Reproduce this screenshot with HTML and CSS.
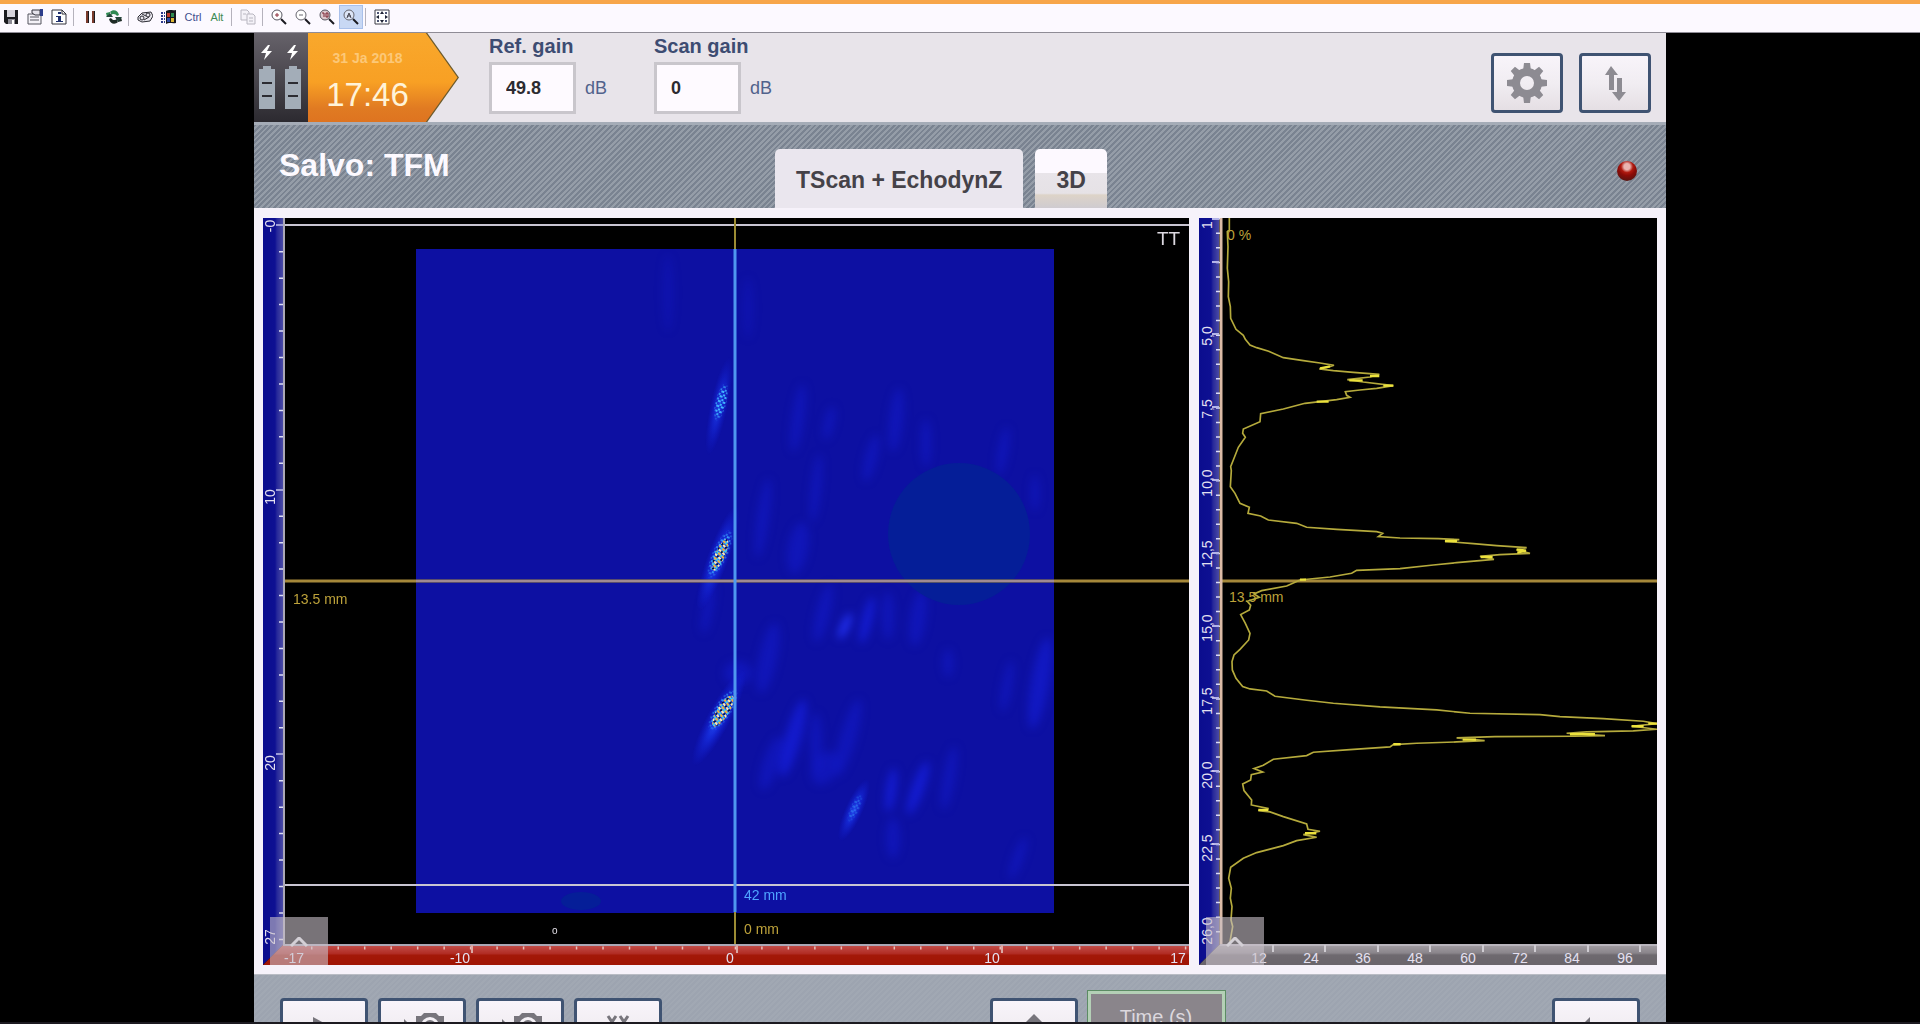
FILE: index.html
```html
<!DOCTYPE html>
<html lang="en">
<head>
  <meta charset="UTF-8">
  <meta name="viewport" content="width=device-width, initial-scale=1.0">
  <title>Salvo: TFM</title>
  <link rel="stylesheet" href="styles.css">
</head>
<body>

  <nav class="toolbar">
    <button class="tool" aria-label="Save"><svg viewBox="0 0 16 16"><path d="M1 1h14v14H3l-2-2z" fill="#1b1b20"/><path d="M4 1h8v7H4z" fill="#d6d3dc"/><path d="M5 10h7v5H5z" fill="#8c8a94"/><path d="M9 11h2v4H9z" fill="#fff"/></svg></button>
    <button class="tool" aria-label="Options"><svg viewBox="0 0 16 16"><path d="M1 5h13v10H1z" fill="#f4f2f8" stroke="#55555f"/><path d="M3 8h9M3 11h9" stroke="#55555f"/><path d="M5 1h8v5H8L5 4z" fill="#e4e2ea" stroke="#33333c"/><path d="M13 0h3v7h-3z" fill="#2d3d8c"/></svg></button>
    <button class="tool" aria-label="Information"><svg viewBox="0 0 16 16"><path d="M1 1h10l4 4v10H1z" fill="#fff" stroke="#33333c"/><path d="M11 1v4h4" fill="none" stroke="#33333c"/><path d="M7 3h3v2H7zM5 7h5v5h2v1H5v-1h2V8H5z" fill="#1f2f6e"/></svg></button>
    <span class="sep"></span>
    <button class="tool" aria-label="Pause"><svg viewBox="0 0 16 16"><path d="M4 2h3v12H4zM10 2h3v12h-3z" fill="#7a3a2c"/><path d="M6 2h1v12H6zM12 2h1v12h-1z" fill="#1b1b20"/></svg></button>
    <button class="tool" aria-label="Refresh"><svg viewBox="0 0 16 16"><path d="M1 8L5 3V6C7 4 10 5 11 7L13 6C12 1 7 0 4 3L0 4z" fill="#2f8a52"/><path d="M15 8l-4 5v-3c-2 2-5 1-6-1L3 10c1 5 6 6 9 3l4-1z" fill="#1e2b26"/><path d="M0 8h7L4 4zM9 8h7l-4 5z" fill="#24463a"/></svg></button>
    <span class="sep"></span>
    <button class="tool" aria-label="Connection"><svg viewBox="0 0 16 16"><g fill="#e9e7ee" stroke="#2c2c34"><path d="M1 8l4-4 9-1 2 4-3 5-8 1-4-2z"/><circle cx="5" cy="9" r="2"/><circle cx="11" cy="6" r="2"/><path d="M7 11l5-3M5 5l4 2"/></g></svg></button>
    <button class="tool" aria-label="Start menu"><svg viewBox="0 0 16 16"><path d="M5 2c4-2 6 0 10-1v13c-4 1-6-1-10 1z" fill="#17171c"/><path d="M6 4h3v4H6z" fill="#c0392b"/><path d="M10 4h3v4h-3z" fill="#2e8b4f"/><path d="M6 9h3v4H6z" fill="#2b49a8"/><path d="M10 9h3v4h-3z" fill="#dcb632"/><path d="M0 4h4M0 7h4M0 10h4M0 13h4" stroke="#2b3a8c" stroke-width="2" stroke-dasharray="2 1"/></svg></button>
    <button class="tool ctrl">Ctrl</button>
    <button class="tool alt">Alt</button>
    <span class="sep"></span>
    <button class="tool" aria-label="Copy"><svg viewBox="0 0 16 16" fill="#f4f2f8" stroke="#b8b6c0"><path d="M1 1h6l2 2v8H1z"/><path d="M7 5h6l2 2v8H7z"/><path d="M9 9h4M9 12h4M3 5h3"/></svg></button>
    <span class="sep"></span>
    <button class="tool" aria-label="Zoom in"><svg viewBox="0 0 16 16"><circle cx="6" cy="6" r="5" fill="#fff" stroke="#55555f"/><path d="M6 4v4M4 6h4" stroke="#8c2f3c"/><path d="M10 10l5 5" stroke="#1b1b20" stroke-width="2"/></svg></button>
    <button class="tool" aria-label="Zoom out"><svg viewBox="0 0 16 16"><circle cx="6" cy="6" r="5" fill="#fff" stroke="#66666f"/><path d="M4 6h4" stroke="#66666f"/><path d="M10 10l5 5" stroke="#1b1b20" stroke-width="2"/></svg></button>
    <button class="tool" aria-label="Zoom 100%"><svg viewBox="0 0 16 16"><circle cx="6" cy="6" r="5" fill="#dcc8cc" stroke="#55555f"/><path d="M3 4h2v4M7 4h2v4H7z" fill="none" stroke="#7a2330"/><path d="M10 10l5 5" stroke="#1b1b20" stroke-width="2"/></svg></button>
    <button class="tool active" aria-label="Zoom auto"><svg viewBox="0 0 16 16"><circle cx="6" cy="6" r="5" fill="#dde5f6" stroke="#66666f"/><path d="M4 9l2-5 2 5M4 7h4" fill="none" stroke="#44444f"/><path d="M10 10l5 5" stroke="#1b1b20" stroke-width="2"/></svg></button>
    <span class="sep"></span>
    <button class="tool" aria-label="Full screen"><svg viewBox="0 0 16 16"><path d="M1 1h14v14H1z" fill="#fff" stroke="#3c3c46"/><path d="M8 2l2 3H6zM8 14l2-3H6zM2 8l3-2v4zM14 8l-3-2v4z" fill="#1f2436"/><path d="M3 3h2v2H3zM11 3h2v2h-2zM3 11h2v2H3zM11 11h2v2h-2z" fill="#4c5474"/></svg></button>
  </nav>

  <main class="app">
    <header class="header">
      <svg class="battery" viewBox="0 0 54 89">
        <defs>
          <g id="cell">
            <path d="M8 12L1 20h5l-2 7 8-9H7l3-6z" fill="#fff"/>
            <path d="M-1 36h16v40H-1zM3 33h8v3H3z" fill="#a3adb8"/>
            <path d="M2 50h10M2 63h10" stroke="#2c2c32" stroke-width="2"/>
          </g>
        </defs>
        <use href="#cell" x="6"/>
        <use href="#cell" x="32"/>
      </svg>
      <div class="clock">
        <span class="date">31 Ja 2018</span>
        <span class="time">17:46</span>
      </div>
      <div class="field">
        <label for="ref-gain">Ref. gain</label>
        <input type="text" id="ref-gain" value="49.8"><span class="unit">dB</span>
      </div>
      <div class="field">
        <label for="scan-gain">Scan gain</label>
        <input type="text" id="scan-gain" value="0"><span class="unit">dB</span>
      </div>
      <div class="actions">
        <button class="key" aria-label="Settings">
          <svg viewBox="0 0 40 40" width="40" height="40">
            <g fill="#8d8b92">
              <path id="teeth" d="M17 0h6l1 8h-8zM17 40h6l1-8h-8zM0 17v6l8 1v-8zM40 17v6l-8 1v-8z"/>
              <use href="#teeth" transform="rotate(45 20 20)"/>
            </g>
            <circle cx="20" cy="20" r="11" fill="none" stroke="#8d8b92" stroke-width="8"/>
          </svg>
        </button>
        <button class="key" aria-label="Transfer">
          <svg viewBox="0 0 40 40" width="40" height="40"><path d="M16 3l7 9h-4v15h-5V12h-4zM24 38l-7-9h5V15h5v14h4z" fill="#8d8b92"/></svg>
        </button>
      </div>
    </header>

    <div class="tabbar">
      <h1>Salvo: TFM</h1>
      <button class="tab selected">TScan + EchodynZ</button>
      <button class="tab">3D</button>
      <span class="led"></span>
    </div>

    <div class="views">
      <!-- TFM image -->
      <section class="view">
        <svg viewBox="0 0 926 747">
          <defs>
            <linearGradient id="blue-axis"><stop offset="0" stop-color="#0b0d8e"/><stop offset=".6" stop-color="#0e1092"/><stop offset=".7" stop-color="#26289a"/><stop offset="1" stop-color="#4a4aa4"/></linearGradient>
            <linearGradient id="red-axis" x2="0" y2="1"><stop offset="0" stop-color="#c4504c"/><stop offset=".45" stop-color="#b02a22"/><stop offset=".5" stop-color="#a31808"/><stop offset="1" stop-color="#a01404"/></linearGradient>
            <linearGradient id="grey-axis" x2="0" y2="1"><stop offset="0" stop-color="#a39ea4"/><stop offset=".4" stop-color="#8a858b"/><stop offset=".5" stop-color="#6e696f"/><stop offset="1" stop-color="#6a656b"/></linearGradient>
            <radialGradient id="glow"><stop offset="0" stop-color="#2a5cff"/><stop offset=".4" stop-color="#1a38f4" stop-opacity=".7"/><stop offset="1" stop-color="#1420e0" stop-opacity="0"/></radialGradient>
            <radialGradient id="fade"><stop offset=".6" stop-color="#fff"/><stop offset="1" stop-color="#fff" stop-opacity="0"/></radialGradient>
            <pattern id="cool" width="5" height="5" patternUnits="userSpaceOnUse" patternTransform="rotate(20)">
              <path d="M0 0h3v2H0zM3 3h2v2H3z" fill="#3fb4ff"/>
            </pattern>
            <pattern id="hot" width="5" height="6" patternUnits="userSpaceOnUse" patternTransform="rotate(20)">
              <path d="M0 0h3v2H0z" fill="#ffe9b0"/><path d="M2 3h3v2H2z" fill="#f2b23c"/><path d="M3 0h2v2H3z" fill="#06103c"/><path d="M0 3h2v2H0z" fill="#38c8f0"/>
            </pattern>
            <filter id="soft" filterUnits="userSpaceOnUse" x="153" y="31" width="638" height="664" color-interpolation-filters="sRGB"><feGaussianBlur stdDeviation="4"/></filter>
            <mask id="m1"><ellipse cx="458" cy="184" rx="6" ry="20" fill="url(#fade)" transform="rotate(14 458 184)"/></mask>
            <mask id="m2"><ellipse cx="457" cy="336" rx="8" ry="27" fill="url(#fade)" transform="rotate(24 457 336)"/></mask>
            <mask id="m3"><ellipse cx="460" cy="492" rx="9" ry="25" fill="url(#fade)" transform="rotate(32 460 492)"/></mask>
            <mask id="m4"><ellipse cx="592" cy="590" rx="5" ry="16" fill="url(#fade)" transform="rotate(24 592 590)"/></mask>
          </defs>
          <rect width="926" height="747"/>
          <rect x="153" y="31" width="638" height="664" fill="#0d10a2"/>

          <!-- faint structure noise -->
          <g filter="url(#soft)" fill="#141cd0" fill-opacity=".5">
            <ellipse cx="405" cy="75" rx="5" ry="38" fill-opacity=".3"/>
            <ellipse cx="485" cy="90" rx="5" ry="30" fill-opacity=".3"/>
            <ellipse cx="535" cy="200" rx="6" ry="34" transform="rotate(8 535 200)"/>
            <ellipse cx="566" cy="205" rx="5" ry="17" transform="rotate(12 566 205)"/>
            <ellipse cx="633" cy="202" rx="7" ry="32" transform="rotate(6 633 202)"/>
            <ellipse cx="608" cy="240" rx="6" ry="24" transform="rotate(14 608 240)"/>
            <ellipse cx="663" cy="225" rx="5" ry="24"/>
            <ellipse cx="740" cy="233" rx="5" ry="24" transform="rotate(10 740 233)"/>
            <ellipse cx="772" cy="275" rx="4" ry="18"/>
            <ellipse cx="553" cy="270" rx="5" ry="34" transform="rotate(6 553 270)"/>
            <ellipse cx="500" cy="300" rx="6" ry="40" transform="rotate(8 500 300)"/>
            <ellipse cx="535" cy="330" rx="10" ry="26" transform="rotate(10 535 330)"/>
            <ellipse cx="560" cy="395" rx="7" ry="30" transform="rotate(14 560 395)"/>
            <ellipse cx="582" cy="408" rx="4" ry="14" transform="rotate(24 582 408)" fill="#2230f0" fill-opacity="1"/>
            <ellipse cx="604" cy="402" rx="5" ry="24" transform="rotate(14 604 402)" fill-opacity="1"/>
            <ellipse cx="625" cy="398" rx="6" ry="24"/>
            <ellipse cx="655" cy="400" rx="8" ry="28" transform="rotate(8 655 400)"/>
            <ellipse cx="685" cy="445" rx="5" ry="14"/>
            <ellipse cx="505" cy="440" rx="9" ry="36" transform="rotate(12 505 440)"/>
            <ellipse cx="744" cy="468" rx="5" ry="26" transform="rotate(10 744 468)"/>
            <ellipse cx="777" cy="465" rx="9" ry="46" transform="rotate(10 777 465)" fill-opacity=".7"/>
            <ellipse cx="530" cy="520" rx="8" ry="40" transform="rotate(16 530 520)" fill-opacity=".9"/>
            <ellipse cx="553" cy="525" rx="6" ry="30"/>
            <ellipse cx="508" cy="545" rx="8" ry="28" transform="rotate(18 508 545)"/>
            <ellipse cx="585" cy="520" rx="8" ry="40" transform="rotate(16 585 520)"/>
            <ellipse cx="562" cy="550" rx="12" ry="18" transform="rotate(30 562 550)"/>
            <ellipse cx="628" cy="572" rx="5" ry="22" transform="rotate(8 628 572)" fill-opacity="1"/>
            <ellipse cx="655" cy="570" rx="6" ry="28" transform="rotate(20 655 570)" fill-opacity="1"/>
            <ellipse cx="686" cy="560" rx="6" ry="32" transform="rotate(10 686 560)"/>
            <ellipse cx="630" cy="620" rx="7" ry="20"/>
            <ellipse cx="755" cy="640" rx="5" ry="22" transform="rotate(20 755 640)"/>
            <ellipse cx="445" cy="390" rx="5" ry="26" transform="rotate(10 445 390)"/>
            <ellipse cx="475" cy="455" rx="14" ry="12"/>
          </g>

          <!-- echoes -->
          <ellipse cx="456" cy="188" rx="9" ry="50" fill="url(#glow)" transform="rotate(12 456 188)" opacity=".7"/>
          <ellipse cx="455" cy="340" rx="11" ry="56" fill="url(#glow)" transform="rotate(20 455 340)" opacity=".9"/>
          <ellipse cx="456" cy="500" rx="12" ry="54" fill="url(#glow)" transform="rotate(28 456 500)" opacity=".9"/>
          <ellipse cx="591" cy="592" rx="9" ry="34" fill="url(#glow)" transform="rotate(24 591 592)" opacity=".8"/>
          <rect x="440" y="155" width="36" height="60" fill="url(#cool)" mask="url(#m1)"/>
          <rect x="430" y="300" width="50" height="72" fill="url(#cool)" mask="url(#m2)"/>
          <ellipse cx="457" cy="337" rx="5" ry="17" fill="url(#hot)" transform="rotate(24 457 337)"/>
          <rect x="430" y="462" width="50" height="66" fill="url(#cool)" mask="url(#m3)"/>
          <ellipse cx="460" cy="493" rx="6" ry="18" fill="url(#hot)" transform="rotate(32 460 493)"/>
          <rect x="580" y="570" width="26" height="40" fill="url(#cool)" mask="url(#m4)" opacity=".35"/>

          <circle cx="696" cy="316" r="71" fill="#051e98"/>
          <ellipse cx="318" cy="683" rx="20" ry="9" fill="#051e98"/>

          <!-- cursors -->
          <path d="M21 7h905M21 667h905" stroke="#c9c5d2" stroke-width="2"/>
          <path d="M21 363h905" stroke="#a5883a" stroke-width="3"/>
          <path d="M153 363h638" stroke="#a08a92" stroke-width="2"/>
          <path d="M472 0v31M472 694v33" stroke="#9c8c34" stroke-width="2"/>
          <path d="M472 31v663" stroke="#4f97f0" stroke-width="3"/>
          <g class="cursor-text">
            <text x="30" y="386">13.5 mm</text>
            <text x="481" y="716">0 mm</text>
            <text x="481" y="682" class="cyan">42 mm</text>
          </g>
          <text class="mode" x="894" y="27">TT</text>
          <text class="mark" x="289" y="716">o</text>

          <!-- axes -->
          <path d="M0 0h20v727L0 747z" fill="url(#blue-axis)"/>
          <path d="M0 747l20-20h906v20z" fill="url(#red-axis)"/>
          <path d="M21 0v727h905" fill="none" stroke="#aba8b6" stroke-width="2"/>
          <path d="M18 6.5v720" stroke="#dcdcf4" stroke-width="4" stroke-dasharray="1.5 24.95"/>
          <path d="M13 7h7M13 272h7M13 536h7" stroke="#9c9cd8" stroke-width="2"/>
          <path d="M48 730h878" stroke="#e8c0bc" stroke-width="3" stroke-dasharray="1.5 24.98"/>
          <path d="M209 727v8M474 727v8M739 727v8" stroke="#dca8a4" stroke-width="2"/>
          <g class="axis-text">
            <text transform="translate(12 8) rotate(-90)">-0</text>
            <text transform="translate(12 279) rotate(-90)">10</text>
            <text transform="translate(12 545) rotate(-90)">20</text>
            <text transform="translate(12 719) rotate(-90)">27</text>
            <text x="31" y="745">-17</text>
            <text x="197" y="745">-10</text>
            <text x="467" y="745">0</text>
            <text x="729" y="745">10</text>
            <text x="915" y="745">17</text>
          </g>
        </svg>
        <button class="expand" aria-label="Expand view"><svg viewBox="0 0 18 10"><path d="M1 9l8-8 8 8" fill="none" stroke="#d4d0d6" stroke-width="3"/></svg></button>
      </section>

      <!-- echodynamic curve -->
      <section class="view">
        <svg viewBox="0 0 458 747">
          <rect width="458" height="747"/>
          <path d="M23 363h435" stroke="#a5883a" stroke-width="3"/>
          <g class="cursor-text">
            <text x="28" y="22">0 %</text>
            <text x="30" y="384">13.5 mm</text>
          </g>
          <g transform="translate(-9 -8) scale(.3333)">
            <polyline class="curve" points="118,24 118,60 112,65 114,110 112,175 116,215 115,260 121,290 122,325 138,358 160,376 166,388 180,405 200,413 236,424 280,443 340,452 390,459 432,466 412,472 388,477 430,482 490,487 568,493 540,501 472,509 520,516 610,527 560,535 510,540 466,545 470,556 480,562 440,569 345,580 280,597 212,611 210,635 160,657 158,670 166,682 145,712 130,750 122,770 124,782 121,830 135,850 150,880 178,892 174,910 212,918 235,930 320,940 350,952 440,958 560,965 578,970 565,980 630,984 745,986 808,989 765,994 850,1001 920,1007 1010,1013 980,1020 1020,1030 930,1034 870,1039 912,1048 800,1058 730,1065 630,1076 500,1081 485,1090 420,1101 330,1110 290,1128 215,1142 192,1152 208,1162 172,1174 182,1186 178,1200 152,1214 166,1240 180,1270 176,1290 150,1318 132,1335 126,1355 127,1380 138,1405 158,1430 180,1437 230,1443 255,1459 350,1471 430,1480 570,1491 740,1500 840,1510 1050,1514 1110,1520 1240,1526 1360,1534 1401,1541 1325,1549 1401,1558 1330,1563 1190,1566 1130,1570 1245,1577 1150,1579 915,1580 800,1584 884,1592 800,1596 680,1600 610,1604 600,1611 480,1619 370,1627 350,1637 250,1648 220,1666 192,1676 218,1686 184,1694 182,1710 158,1722 162,1742 185,1770 184,1785 236,1796 205,1802 240,1806 280,1820 350,1842 354,1858 390,1864 340,1874 380,1882 320,1892 280,1907 200,1928 160,1945 122,1972 116,2005 124,2035 121,2065 126,2090 123,2130 128,2150 120,2195"/>
            <path class="hot-spot" d="M390 475l30-6M540 498h28M478 511h40M580 527h30M380 575h36M765 993h36M980 1018l28 4-26 6M872 1041h36M330 1109h18M1325 1549h36M1375 1541h26M1140 1573h75M818 1589h40M610 1603h22M205 1800h30M345 1870h34"/>
          </g>

          <path d="M0 0h20v727L0 747z" fill="url(#blue-axis)"/>
          <path d="M0 747l20-20h438v20z" fill="url(#grey-axis)"/>
          <path d="M22 0v727" stroke="#dcbba6" stroke-width="3"/>
          <path d="M21 727h437" stroke="#b9b5bd" stroke-width="2"/>
          <path d="M19 0v727" stroke="#dcdcf4" stroke-width="4" stroke-dasharray="1.5 13.05"/>
          <path d="M13 1h7M13 44h7M13 116h7M13 189h7M13 262h7M13 335h7M13 408h7M13 480h7M13 553h7M13 626h7" stroke="#b4b4e8" stroke-width="2"/>
          <path d="M74 727v7M126 727v7M179 727v7M231 727v7M284 727v7M336 727v7M389 727v7M441 727v7" stroke="#cfccd2" stroke-width="2"/>
          <g class="axis-text">
            <text transform="translate(13 7) rotate(-90)">1</text>
            <text transform="translate(13 118) rotate(-90)">5,0</text>
            <text transform="translate(13 191) rotate(-90)">7,5</text>
            <text transform="translate(13 265) rotate(-90)">10,0</text>
            <text transform="translate(13 336) rotate(-90)">12,5</text>
            <text transform="translate(13 410) rotate(-90)">15,0</text>
            <text transform="translate(13 483) rotate(-90)">17,5</text>
            <text transform="translate(13 557) rotate(-90)">20,0</text>
            <text transform="translate(13 630) rotate(-90)">22,5</text>
            <text transform="translate(13 713) rotate(-90)">26,0</text>
            <text x="60" y="745">12</text>
            <text x="112" y="745">24</text>
            <text x="164" y="745">36</text>
            <text x="216" y="745">48</text>
            <text x="269" y="745">60</text>
            <text x="321" y="745">72</text>
            <text x="373" y="745">84</text>
            <text x="426" y="745">96</text>
          </g>
        </svg>
        <button class="expand" aria-label="Expand view"><svg viewBox="0 0 18 10"><path d="M1 9l8-8 8 8" fill="none" stroke="#d4d0d6" stroke-width="3"/></svg></button>
      </section>
    </div>

    <footer class="controls">
      <div class="group">
        <button class="key" aria-label="Play"><svg viewBox="0 0 40 40" width="40" height="40"><path d="M9 9l22 12L9 33z" fill="#77757c"/></svg></button>
        <button class="key" aria-label="Snapshot"><svg viewBox="0 0 50 40" width="50" height="40"><g id="camera"><path d="M19 8h5l3-3h12l3 3h5v24H19z" fill="#77757c"/><circle cx="33" cy="18" r="9" fill="#f4f1f6"/><circle cx="33" cy="18" r="6" fill="#77757c"/><path d="M7 11l7 7-7 7z" fill="#77757c"/></g></svg></button>
        <button class="key" aria-label="Snapshot and save"><svg viewBox="0 0 50 40" width="50" height="40"><use href="#camera"/></svg></button>
        <button class="key" aria-label="Freeze"><svg viewBox="0 0 40 40" width="40" height="40"><path d="M10 8l8 12M18 8l-8 12M22 8l8 12M30 8l-8 12" stroke="#77757c" stroke-width="3"/></svg></button>
      </div>
      <div class="group">
        <button class="key" aria-label="Previous"><svg viewBox="0 0 40 40" width="40" height="40"><path d="M20 6l14 14H6z" fill="#77757c"/></svg></button>
        <button class="source">Time (s)</button>
      </div>
      <div class="group">
        <button class="key" aria-label="Back"><svg viewBox="0 0 40 40" width="40" height="40"><path d="M14 9v24L2 21z" fill="#77757c"/></svg></button>
      </div>
    </footer>
  </main>

</body>
</html>
```
FILE: styles.css
```css
* {
  box-sizing: border-box;
}

body {
  margin: 0;
  height: 100vh;
  display: flex;
  flex-direction: column;
  overflow: hidden;
  background: #000;
  border-bottom: 2px solid #1c1a20;
  font-family: "Liberation Sans", Arial, sans-serif;
}

button {
  padding: 0;
  border: none;
  background: none;
  font-family: inherit;
  cursor: pointer;
}

svg {
  display: block;
}

/* Toolbar */
.toolbar {
  display: flex;
  align-items: center;
  gap: 2px;
  flex: none;
  height: 33px;
  padding-bottom: 3px;
  border-top: 4px solid #f7a64a;
  border-bottom: 1px solid #8f8c96;
  background: #fcf9ff;
}

.tool {
  display: flex;
  align-items: center;
  justify-content: center;
  width: 22px;
  height: 22px;
  font-size: 11px;
}

.tool svg {
  width: 16px;
  height: 16px;
}

.tool.active {
  background: #c8d8f4;
  outline: 1px solid #a9c0ea;
}

.ctrl {
  color: #3f4f8e;
}

.alt {
  color: #3d8a55;
}

.sep {
  width: 1px;
  height: 18px;
  margin: 0 3px 0 1px;
  background: #b5b2bc;
}

/* Instrument screen */
.app {
  display: flex;
  flex-direction: column;
  flex: 1;
  min-height: 0;
  width: 100%;
  max-width: 1412px;
  margin: 0 auto;
  overflow: hidden;
  background: #f6f2fa;
}

.header {
  display: flex;
  flex: none;
  height: 89px;
  background: #e8e4ea;
}

.battery {
  width: 54px;
  background: linear-gradient(#66626a, #4a474e 50%, #2c2a30);
}

.clock {
  position: relative;
  z-index: 0;
  display: flex;
  flex-direction: column;
  align-items: center;
  width: 151px;
  margin-right: 30px;
  padding: 15px 32px 0 0;
  background: #6b5a2c;
  clip-path: polygon(0 0, 79% 0, 100% 50%, 79% 100%, 0 100%);
}

.clock::before {
  content: "";
  position: absolute;
  inset: 0;
  z-index: -1;
  background: linear-gradient(#f9a82c, #f8a024 55%, #e07a22 85%, #de7420);
  clip-path: polygon(0 0, 78% 0, 99% 50%, 78% 100%, 0 100%);
}

.date {
  line-height: 20px;
  font-size: 14px;
  font-weight: bold;
  color: #fcc878;
}

.time {
  margin-top: 9px;
  line-height: 36px;
  font-size: 33px;
  color: #fff3d8;
}

.field {
  width: 165px;
  padding-top: 1px;
}

.field label {
  display: block;
  margin-bottom: 4px;
  line-height: 24px;
  font-size: 20px;
  font-weight: bold;
  color: #3d4c72;
}

.field input {
  width: 87px;
  height: 52px;
  padding: 0 14px;
  border: 3px solid #c9c6cc;
  background: #fefaff;
  font-family: inherit;
  font-size: 18px;
  font-weight: bold;
  color: #2c2a30;
}

.unit {
  margin-left: 9px;
  font-size: 18px;
  color: #51628c;
}

.actions {
  display: flex;
  gap: 16px;
  margin: 20px 15px 0 auto;
}

.key {
  display: flex;
  align-items: center;
  justify-content: center;
  width: 72px;
  height: 60px;
  border: 3px solid #3f5372;
  border-radius: 4px;
  background: linear-gradient(#f8f4fa, #f1edf2 50%, #e5dfe4);
}

/* Title and tabs */
.tabbar {
  display: flex;
  align-items: flex-end;
  flex: none;
  height: 86px;
  border-top: 3px solid #a5acb7;
  background: repeating-linear-gradient(135deg, #7a8391 0 2px, #959da8 2px 4px);
}

h1 {
  flex: 0 0 521px;
  margin: 0;
  padding: 0 0 25px 25px;
  line-height: 36px;
  font-size: 32px;
  color: #fcf9ff;
}

.tab {
  height: 59px;
  margin-right: 12px;
  padding: 3px 21px 0;
  border-radius: 5px 5px 0 0;
  background: linear-gradient(#fdf9ff 40%, #e8e4e9 41%, #e6e2e6 75%, #ddd3c8 78%, #cfcbd0);
  font-size: 23px;
  font-weight: bold;
  color: #454248;
}

.tab.selected {
  background: #eae6ee;
}

.led {
  align-self: center;
  width: 20px;
  height: 20px;
  margin: 8px 29px 0 auto;
  border-radius: 50%;
  background: radial-gradient(circle at 50% 28%, #eab4b0 0 3px, #b01a10 6px, #8c0c08 9px, #3c1814);
}

/* Views */
.views {
  display: grid;
  grid-template-columns: 926fr 458fr;
  gap: 10px;
  flex: none;
  padding: 10px 9px 9px;
}

.view {
  position: relative;
}

.view > svg {
  width: 100%;
}

.axis-text text {
  font-size: 14px;
  text-anchor: middle;
  fill: #e4e0f0;
}

.cursor-text {
  font-size: 14px;
  fill: #bda23a;
}

.cursor-text .cyan {
  fill: #4fa4ff;
}

.mode {
  font-size: 19px;
  fill: #dcd8e0;
}

.mark {
  font-size: 10px;
  fill: #e4e0e8;
}

.curve {
  fill: none;
  stroke: #b5aa3c;
  stroke-width: 5;
}

.hot-spot {
  fill: none;
  stroke: #ece23c;
  stroke-width: 7;
}

.expand {
  position: absolute;
  left: 7px;
  bottom: 0;
  display: flex;
  justify-content: center;
  width: 58px;
  height: 48px;
  padding-top: 20px;
  background: rgba(200, 192, 200, 0.6);
}

.expand svg {
  width: 18px;
  height: 10px;
}

/* Bottom controls */
.controls {
  display: flex;
  justify-content: space-between;
  flex: none;
  padding: 23px 26px;
  border-top: 1px solid #b9bcc4;
  background: repeating-linear-gradient(135deg, #9da4b0 0 2px, #a1a8b3 2px 4px);
}

.group {
  display: flex;
  gap: 10px;
}

.controls .key {
  align-items: flex-start;
  width: 88px;
  padding-top: 7px;
}

.source {
  width: 137px;
  height: 66px;
  margin-top: -7px;
  padding-bottom: 14px;
  border: 3px solid #b4d0b6;
  outline: 1px solid #5c8c64;
  background: #8a858b;
  font-size: 20px;
  color: #dcd8de;
}
```
